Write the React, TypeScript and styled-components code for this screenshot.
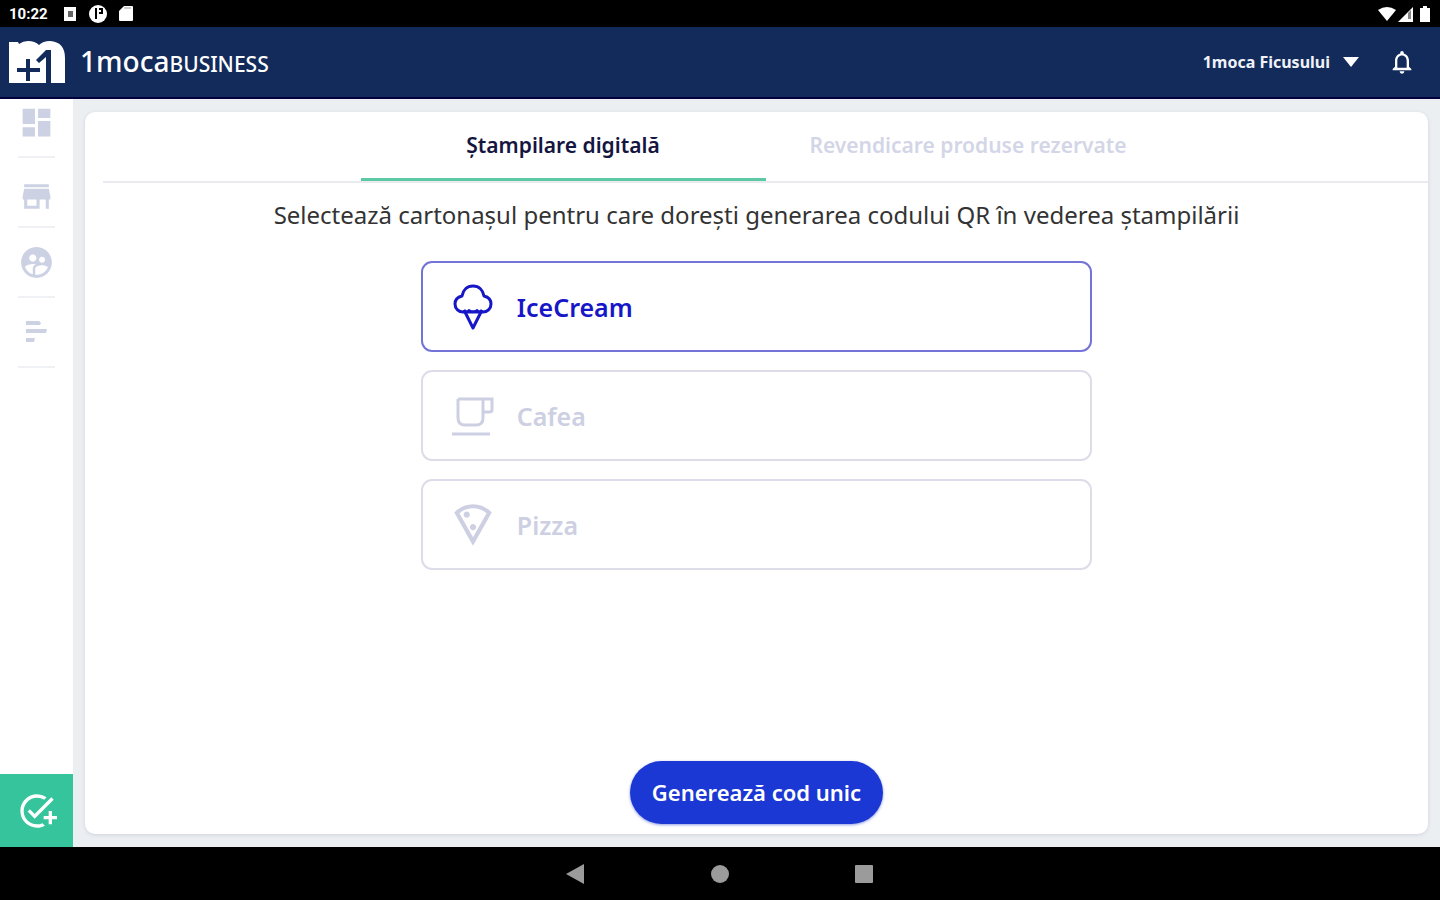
import React, { useState } from 'react';
import styled, { createGlobalStyle } from 'styled-components';
import {
  MdDashboard, MdStore, MdSupervisedUserCircle, MdAddTask,
  MdOutlineLocalPizza, MdNotificationsNone,
} from 'react-icons/md';

const GlobalStyle = createGlobalStyle`
  * { box-sizing: border-box; }
  body { margin: 0; font-family: "Noto Sans", "Open Sans", sans-serif; background: #eceff2; }
  button { font: inherit; border: 0; padding: 0; margin: 0; background: none; cursor: pointer; }
`;

const Screen = styled.div`
  min-height: 100vh;
  display: flex;
  flex-direction: column;
`;

const StatusBar = styled.div`
  height: 27px;
  padding: 0 6px 0 9px;
  display: flex;
  justify-content: space-between;
  align-items: center;
  background: #000;
  color: #fff;
`;

const StatusGroup = styled.div<{ $gap: number }>`
  display: flex;
  align-items: center;
  gap: ${({ $gap }) => $gap}px;
`;

const Clock = styled.time`
  width: 42px;
  font: 700 15px/20px Roboto, sans-serif;
`;

const Header = styled.header`
  height: 72px;
  padding: 0 24px 0 8px;
  display: flex;
  align-items: center;
  justify-content: space-between;
  background: #122b5a;
  border-bottom: 2px solid #00003f;
  color: #fff;
`;

const Brand = styled.a`
  display: flex;
  align-items: center;
  gap: 14px;
  color: #fff;
  text-decoration: none;
`;

const BrandName = styled.span`
  font-size: 28px;
  line-height: 36px;
  font-weight: 500;
`;

const BrandSuffix = styled.span`
  font-size: 21px;
`;

const HeaderTools = styled.div`
  display: flex;
  align-items: center;
  gap: 28px;
`;

const AccountButton = styled.button`
  display: flex;
  align-items: center;
  gap: 12px;
  color: #f0f2f8;
  font-size: 16px;
  line-height: 24px;
  font-weight: 700;
`;

const IconButton = styled.button`
  display: flex;
  color: #fff;
`;

const Body = styled.div`
  flex: 1;
  display: flex;
`;

const Sidebar = styled.nav`
  width: 73px;
  display: flex;
  flex-direction: column;
  align-items: center;
  background: #fff;
`;

const SideLink = styled.a`
  width: 37px;
  height: 70px;
  display: flex;
  align-items: center;
  justify-content: center;
  color: #cdd1e4;
  border-bottom: 2px solid #f0f1f5;

  &:first-child { height: 59px; padding-bottom: 10px; }
`;

const StoreLink = styled(SideLink)`
  padding-top: 8px;
`;

const StampLink = styled.a`
  width: 100%;
  height: 73px;
  margin-top: auto;
  display: flex;
  align-items: center;
  justify-content: center;
  background: #35c49c;
  color: #fff;
`;

const Main = styled.main`
  flex: 1;
  display: flex;
  padding: 13px 12px;
`;

const Panel = styled.section`
  flex: 1;
  display: flex;
  flex-direction: column;
  align-items: center;
  padding-bottom: 10px;
  border-radius: 10px;
  background: #fff;
  box-shadow: 0 1px 4px #cfd3dc;
`;

const Tabs = styled.div`
  align-self: stretch;
  margin-left: 18px;
  display: flex;
  justify-content: center;
  border-bottom: 2px solid #eaebf0;
`;

const Tab = styled.button<{ $active: boolean }>`
  width: 405px;
  height: 69px;
  border-bottom: 3px solid ${({ $active }) => ($active ? '#5cc8a4' : 'transparent')};
  color: ${({ $active }) => ($active ? '#14163f' : '#d3d6e7')};
  font-size: 21px;
  line-height: 28px;
  font-weight: 600;
`;

const Prompt = styled.h1`
  margin: 14px 0 0;
  color: #333;
  font-size: 24px;
  line-height: 36px;
  font-weight: 400;
`;

const Options = styled.div`
  width: 50%;
  margin-top: 28px;
  display: flex;
  flex-direction: column;
  gap: 18px;
`;

const Option = styled.label<{ $selected: boolean }>`
  height: 91px;
  padding: 0 25px;
  display: flex;
  align-items: center;
  gap: 19px;
  border: 2px solid ${({ $selected }) => ($selected ? '#7474d8' : '#dcdde8')};
  border-radius: 11px;
  color: ${({ $selected }) => ($selected ? '#1717c8' : '#cdd0e2')};
  font-size: 25px;
  line-height: 36px;
  font-weight: 600;
  cursor: pointer;
`;

const HiddenRadio = styled.input`
  position: absolute;
  opacity: 0;
`;

const GenerateButton = styled.button`
  height: 63px;
  margin-top: auto;
  padding: 0 22px 2px;
  border-radius: 32px;
  background: #1c38d4;
  box-shadow: 0 1px 3px #8f9be0;
  color: #fff;
  font-size: 22px;
  line-height: 28px;
  font-weight: 600;
`;

const SystemNav = styled.div`
  height: 53px;
  display: flex;
  align-items: center;
  justify-content: center;
  gap: 120px;
  background: #000;
`;

const SystemButton = styled.button`
  width: 24px;
  height: 24px;
  display: flex;
`;

const Logo = () => (
  <svg width="58" height="44" viewBox="0 0 58 44" aria-hidden="true">
    <path fill="#fff" d="M1 43V2h9l1 2q4-3 9-3 7 0 11 4 4-4 11-4 15 1 15 17v25z" />
    <path fill="#122b5a" d="M18 19h4v9h10v4H22v9h-4v-9H9v-4h9zM38 10h5v33h-5V17l-7 6-3-3z" />
  </svg>
);

const ListLines = () => (
  <svg width="24" height="24" viewBox="0 0 24 24" fill="currentColor" aria-hidden="true">
    <path d="M1 1h13l2 2-1 2H1zM1 9h21l-1 4H1zM1 18h9l-1 4H1z" />
  </svg>
);

const IceCreamIcon = () => (
  <svg width="50" height="50" viewBox="0 0 50 50" fill="none" stroke="currentColor" strokeWidth="3" strokeLinejoin="round" aria-hidden="true">
    <path d="M14 14c1-6 5-10 11-10s10 4 11 10c4 1 7 4 7 8 0 5-4 8-8 8H15c-4 0-8-3-8-8 0-4 3-7 7-8z" />
    <path d="M16 28l9 18 9-18" />
    <path d="M16 28q2 3 5 0q4 3 8 0q3 3 5 0" strokeWidth="2" />
  </svg>
);

const CupIcon = () => (
  <svg width="50" height="50" viewBox="0 0 50 50" fill="none" stroke="currentColor" strokeWidth="3" aria-hidden="true">
    <path d="M10 8h34v11q0 2-3 2h-6M35 8v19q0 7-7 7H17q-7 0-7-7V8M4 43h38" />
  </svg>
);

const PizzaIcon = () => <MdOutlineLocalPizza size={50} />;

const options: { name: string; Icon: React.ComponentType }[] = [
  { name: 'IceCream', Icon: IceCreamIcon },
  { name: 'Cafea', Icon: CupIcon },
  { name: 'Pizza', Icon: PizzaIcon },
];

const tabs = ['Ștampilare digitală', 'Revendicare produse rezervate'];

export default function App() {
  const [tab, setTab] = useState(0);
  const [choice, setChoice] = useState('IceCream');

  return (
    <Screen>
      <GlobalStyle />
      <StatusBar>
        <StatusGroup $gap={12}>
          <Clock>10:22</Clock>
          <svg width="14" height="14" viewBox="0 0 14 14" aria-hidden="true">
            <path fill="#fff" d="M1 0h12v14H1z" /><path fill="#666" d="M5 4h5v6H5z" />
          </svg>
          <svg width="18" height="18" viewBox="0 0 18 18" aria-hidden="true">
            <circle cx="9" cy="9" r="9" fill="#fff" />
            <path d="M7 3v11M10 4h3v4h-3" fill="none" stroke="#000" strokeWidth="2" />
          </svg>
          <svg width="14" height="17" viewBox="0 0 14 17" aria-hidden="true">
            <path fill="#fff" d="M5 1h8q1 0 1 1v13q0 1-1 1H1q-1 0-1-1V6z" />
            <path d="M5 3h7" stroke="#999" strokeWidth="1" />
          </svg>
        </StatusGroup>
        <StatusGroup $gap={2}>
          <svg width="18" height="16" viewBox="0 0 18 16" aria-hidden="true">
            <path fill="#fff" d="M0 4q9-6 18 0L9 15z" />
          </svg>
          <svg width="16" height="16" viewBox="0 0 16 16" aria-hidden="true">
            <path fill="#fff" d="M0 16L15 1v15z" />
            <path fill="#888" d="M10 7l3-3v9h-3z" />
          </svg>
          <svg width="18" height="18" viewBox="0 0 18 18" aria-hidden="true">
            <path fill="#fff" d="M7 1h4v2h3v14H4V3h3z" />
          </svg>
        </StatusGroup>
      </StatusBar>

      <Header>
        <Brand href="#">
          <Logo />
          <BrandName>1moca<BrandSuffix>BUSINESS</BrandSuffix></BrandName>
        </Brand>
        <HeaderTools>
          <AccountButton>
            1moca Ficusului
            <svg width="18" height="12" viewBox="0 0 18 12" aria-hidden="true"><path fill="#fff" d="M1 1h16l-8 10z" /></svg>
          </AccountButton>
          <IconButton aria-label="Notificări"><MdNotificationsNone size={28} /></IconButton>
        </HeaderTools>
      </Header>

      <Body>
        <Sidebar>
          <SideLink href="#" aria-label="Panou"><MdDashboard size={37} /></SideLink>
          <StoreLink href="#" aria-label="Magazin"><MdStore size={37} /></StoreLink>
          <SideLink href="#" aria-label="Clienți"><MdSupervisedUserCircle size={37} /></SideLink>
          <SideLink href="#" aria-label="Listă"><ListLines /></SideLink>
          <StampLink href="#" aria-label="Ștampilare"><MdAddTask size={40} /></StampLink>
        </Sidebar>
        <Main>
          <Panel>
            <Tabs role="tablist">
              {tabs.map((name, i) => (
                <Tab key={name} role="tab" aria-selected={tab === i} $active={tab === i} onClick={() => setTab(i)}>
                  {name}
                </Tab>
              ))}
            </Tabs>
            <Prompt>Selectează cartonașul pentru care dorești generarea codului QR în vederea ștampilării</Prompt>
            <Options role="radiogroup" aria-label="Cartonaș">
              {options.map(({ name, Icon }) => (
                <Option key={name} $selected={choice === name}>
                  <HiddenRadio type="radio" name="card" checked={choice === name} onChange={() => setChoice(name)} />
                  <Icon />
                  {name}
                </Option>
              ))}
            </Options>
            <GenerateButton>Generează cod unic</GenerateButton>
          </Panel>
        </Main>
      </Body>

      <SystemNav>
        <SystemButton aria-label="Înapoi">
          <svg width="24" height="24" viewBox="0 0 24 24"><path fill="#9b9b9b" d="M2 12L20 2v20z" /></svg>
        </SystemButton>
        <SystemButton aria-label="Acasă">
          <svg width="24" height="24" viewBox="0 0 24 24"><circle cx="12" cy="12" r="9" fill="#9b9b9b" /></svg>
        </SystemButton>
        <SystemButton aria-label="Recente">
          <svg width="24" height="24" viewBox="0 0 24 24"><rect x="3" y="3" width="18" height="18" rx="1" fill="#9b9b9b" /></svg>
        </SystemButton>
      </SystemNav>
    </Screen>
  );
}
